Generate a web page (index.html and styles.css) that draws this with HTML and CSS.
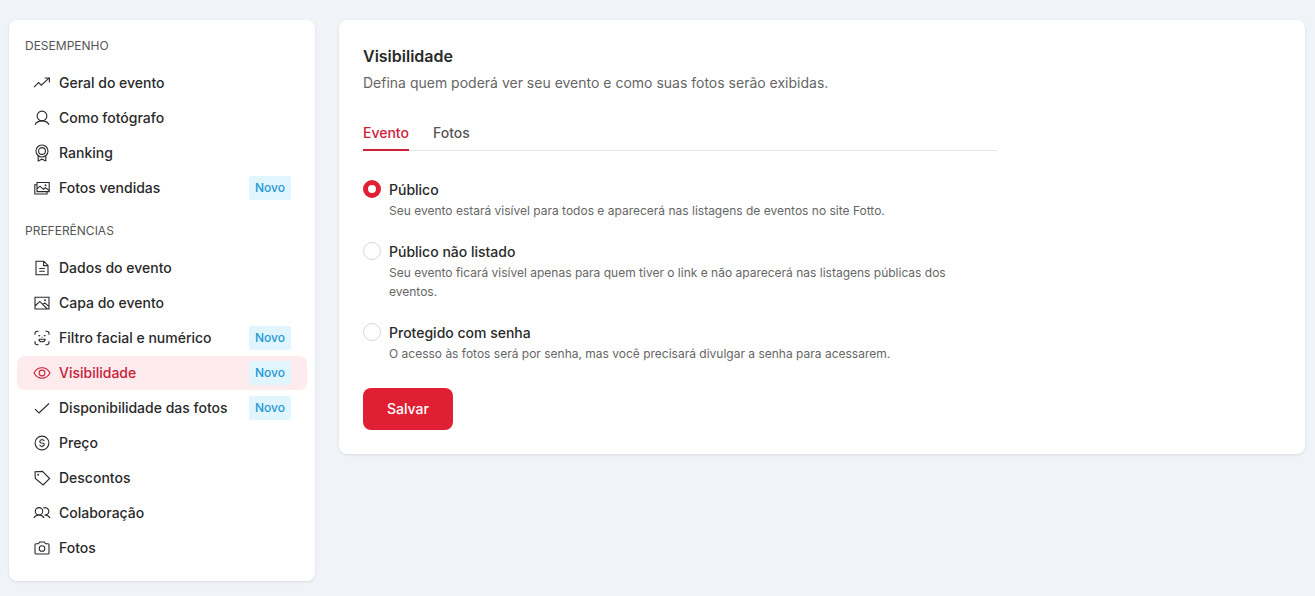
FILE: index.html
```html
<!DOCTYPE html>
<html lang="pt-BR">
<head>
  <meta charset="UTF-8" />
  <meta name="viewport" content="width=device-width, initial-scale=1.0" />
  <title>Visibilidade</title>
  <link rel="stylesheet" href="styles.css">
</head>
<body>
  <div class="layout">
    <nav class="sidebar card">
      <h2 class="menu-title">DESEMPENHO</h2>
      <ul class="menu">
        <li><a href="#" class="menu-item">
          <svg class="icon" viewBox="0 0 18 18"><path d="M1 13.2 5.6 8.6 8.3 11.2 16 4.2M11.6 4H16.4V8.6" /></svg>
          <span>Geral do evento</span>
        </a></li>
        <li><a href="#" class="menu-item">
          <svg class="icon" viewBox="0 0 18 18"><circle cx="9" cy="7" r="4.9" /><path d="M2 15.8C3.2 13.2 5.6 11.9 9 11.9S14.8 13.2 16 15.8" /></svg>
          <span>Como fotógrafo</span>
        </a></li>
        <li><a href="#" class="menu-item">
          <svg class="icon" viewBox="0 0 18 18"><circle cx="9" cy="7" r="6" /><circle cx="9" cy="7" r="3.4" /><path d="M5.2 11.8V17L9 15.2 12.8 17V11.8" /></svg>
          <span>Ranking</span>
        </a></li>
        <li><a href="#" class="menu-item">
          <svg class="icon" viewBox="0 0 18 18"><path d="M4 3.5H16.2V12.6H4ZM4 5.8H1.8V15H14V12.6M4 9.8 7 7.2 10.4 10.3 12.4 8.8 16 11.4" /><circle cx="12.5" cy="6.2" r=".4" /></svg>
          <span>Fotos vendidas</span>
          <span class="badge">Novo</span>
        </a></li>
      </ul>

      <h2 class="menu-title">PREFERÊNCIAS</h2>
      <ul class="menu">
        <li><a href="#" class="menu-item">
          <svg class="icon" viewBox="0 0 18 18"><path d="M3 2.2H10.8L15 6.4V15.8H3ZM10.6 2.4V6.6H14.8M6.2 9.5H11.8M6.2 12.2H11.8" /></svg>
          <span>Dados do evento</span>
        </a></li>
        <li><a href="#" class="menu-item">
          <svg class="icon" viewBox="0 0 18 18"><path d="M2 3.2H16V15H2ZM2 12 6.8 7.4 14.3 15M9.8 10.5 11.8 8.9 16 12.7" /><circle cx="12" cy="6.3" r=".4" /></svg>
          <span>Capa do evento</span>
        </a></li>
        <li><a href="#" class="menu-item">
          <svg class="icon" viewBox="0 0 18 18"><path d="M2 5.8V4.4Q2 2.2 4.2 2.2H5.6M12.4 2.2H13.8Q16 2.2 16 4.4V5.8M16 12.2V13.6Q16 15.8 13.8 15.8H12.4M5.6 15.8H4.2Q2 15.8 2 13.6V12.2M5.5 7Q6.3 6.2 7.1 7M10.9 7Q11.7 6.2 12.5 7M5.8 10.3H12.2Q11.7 12.8 9 12.8T5.8 10.3M9 7.7V8.5" /></svg>
          <span>Filtro facial e numérico</span>
          <span class="badge">Novo</span>
        </a></li>
        <li><a href="#" class="menu-item active" aria-current="page">
          <svg class="icon" viewBox="0 0 18 18"><path d="M1 9C3 5.4 5.6 3.8 9 3.8S15 5.4 17 9C15 12.6 12.4 14.2 9 14.2S3 12.6 1 9Z" /><circle cx="9" cy="9" r="2.9" /></svg>
          <span>Visibilidade</span>
          <span class="badge">Novo</span>
        </a></li>
        <li><a href="#" class="menu-item">
          <svg class="icon" viewBox="0 0 18 18"><path d="M2 10.2 6 14 16 4.5" /></svg>
          <span>Disponibilidade das fotos</span>
          <span class="badge">Novo</span>
        </a></li>
        <li><a href="#" class="menu-item">
          <svg class="icon" viewBox="0 0 18 18"><circle cx="9" cy="9" r="6.9" /><path d="M11.3 7.2Q11 5.8 9 5.8T6.8 7.4 9 9 11.3 10.6 9 12.2 6.7 10.8M9 4.7V5.8M9 12.2V13.3" /></svg>
          <span>Preço</span>
        </a></li>
        <li><a href="#" class="menu-item">
          <svg class="icon" viewBox="0 0 18 18"><path d="M2 2.7 9.5 2.4 16.6 9.5 10.2 16 2.3 9.5Z" /><circle cx="5.2" cy="5.7" r=".4" /></svg>
          <span>Descontos</span>
        </a></li>
        <li><a href="#" class="menu-item">
          <svg class="icon" viewBox="0 0 18 18"><circle cx="6" cy="7.3" r="3.7" /><path d="M.8 14C2 12 3.5 11 6 11S10 12 11.2 14M10.3 4.1A3.7 3.7 0 1 1 11.6 11C14 11 15.8 12 17 14" /></svg>
          <span>Colaboração</span>
        </a></li>
        <li><a href="#" class="menu-item">
          <svg class="icon" viewBox="0 0 18 18"><path d="M3 4.8H5.5L6.7 3H11.3L12.5 4.8H15Q16 4.8 16 5.8V14Q16 15 15 15H3Q2 15 2 14V5.8Q2 4.8 3 4.8Z" /><circle cx="9" cy="9.5" r="2.8" /></svg>
          <span>Fotos</span>
        </a></li>
      </ul>
    </nav>

    <main class="content card">
      <h1 class="title">Visibilidade</h1>
      <p class="subtitle">Defina quem poderá ver seu evento e como suas fotos serão exibidas.</p>

      <div class="tabs" role="tablist">
        <button type="button" class="tab active" role="tab" aria-selected="true">Evento</button>
        <button type="button" class="tab" role="tab" aria-selected="false">Fotos</button>
      </div>

      <form class="options">
        <label class="option">
          <input type="radio" name="visibilidade" value="publico" checked>
          <span class="option-text">
            <span class="option-title">Público</span>
            <span class="option-desc">Seu evento estará visível para todos e aparecerá nas listagens de eventos no site Fotto.</span>
          </span>
        </label>
        <label class="option">
          <input type="radio" name="visibilidade" value="nao-listado">
          <span class="option-text">
            <span class="option-title">Público não listado</span>
            <span class="option-desc">Seu evento ficará visível apenas para quem tiver o link e não aparecerá nas listagens públicas dos eventos.</span>
          </span>
        </label>
        <label class="option">
          <input type="radio" name="visibilidade" value="senha">
          <span class="option-text">
            <span class="option-title">Protegido com senha</span>
            <span class="option-desc">O acesso às fotos será por senha, mas você precisará divulgar a senha para acessarem.</span>
          </span>
        </label>
        <button type="submit" class="btn">Salvar</button>
      </form>
    </main>
  </div>
</body>
</html>
```

FILE: styles.css
```css
* {
  margin: 0;
  padding: 0;
  box-sizing: border-box;
}

body {
  font-family: Inter, "Liberation Sans", sans-serif;
  font-size: 14px;
  line-height: 20px;
  color: #2a2a2a;
  background: #f0f3f8;
}

button {
  font: inherit;
  border: none;
  cursor: pointer;
}

.layout {
  display: flex;
  align-items: flex-start;
  gap: 24px;
  padding: 20px 10px 15px 9px;
}

.card {
  background: #fff;
  border-radius: 8px;
  box-shadow: 0 1px 3px rgba(0, 0, 0, 0.1);
}

/* sidebar */
.sidebar {
  flex: 0 0 306px;
  padding: 16px 8px;
}

.menu-title {
  padding: 0 8px;
  margin-bottom: 10px;
  font-size: 12px;
  font-weight: 400;
  color: #555;
}

.menu {
  display: flex;
  flex-direction: column;
  gap: 1px;
  list-style: none;
}

.menu + .menu-title {
  margin-top: 16px;
}

.menu-item {
  display: flex;
  align-items: center;
  gap: 8px;
  height: 34px;
  padding: 0 16px;
  border-radius: 8px;
  font-weight: 500;
  color: #2a2a2a;
  text-decoration: none;
}

.menu-item.active {
  color: #c8203a;
  background: #fdebed;
}

.icon {
  width: 18px;
  height: 18px;
  fill: none;
  stroke: currentColor;
  stroke-width: 1.1;
}

.badge {
  margin-left: auto;
  padding: 2px 6px;
  border-radius: 2px;
  font-size: 12px;
  color: #2498d5;
  background: #e0f5fe;
}

/* content */
.content {
  flex: 1;
  min-width: 0;
  padding: 24px;
}

.title {
  font-size: 16px;
  line-height: 24px;
  font-weight: 600;
}

.subtitle {
  margin-top: 4px;
  line-height: 22px;
  color: #666;
}

.tabs {
  display: flex;
  gap: 24px;
  max-width: 634px;
  margin-top: 29px;
  border-bottom: 1px solid #e5e5e5;
}

.tab {
  padding-bottom: 6px;
  margin-bottom: -1px;
  border-bottom: 2px solid transparent;
  font-weight: 500;
  color: #555;
  background: none;
}

.tab.active {
  color: #d02038;
  border-color: #d02038;
}

.options {
  display: flex;
  flex-direction: column;
  align-items: flex-start;
  gap: 22px;
  max-width: 634px;
  margin-top: 29px;
}

.option {
  display: flex;
  align-items: flex-start;
  gap: 8px;
  max-width: 600px;
  cursor: pointer;
}

.option input {
  appearance: none;
  flex: none;
  width: 18px;
  height: 18px;
  border: 1px solid #d9d9d9;
  border-radius: 50%;
  background: #fff;
}

.option input:checked {
  border: 5px solid #e01f35;
}

.option-text {
  display: flex;
  flex-direction: column;
  gap: 1px;
}

.option-title {
  font-weight: 500;
}

.option-desc {
  font-size: 12px;
  line-height: 19px;
  color: #666;
}

.btn {
  height: 42px;
  padding: 0 24px;
  margin-top: 3px;
  border-radius: 8px;
  font-weight: 500;
  color: #fff;
  background: #e01f35;
}
```
